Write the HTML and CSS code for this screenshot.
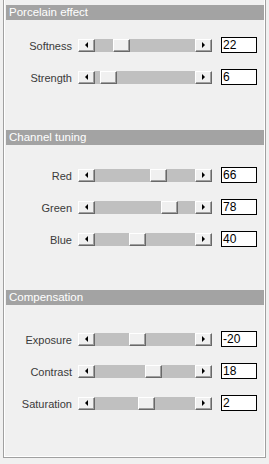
FILE: index.html
```html
<!DOCTYPE html>
<html lang="en">
<head>
    <meta charset="UTF-8">
    <title>Effect settings</title>
    <link rel="stylesheet" href="styles.css">
</head>
<body>

    <div class="panel">
        <div class="section section-porcelain">
            <div class="section-title">Porcelain effect</div>
            <div class="row">
                <div class="row-label">Softness</div>
                <div class="slider">
                    <div class="slider-btn"><span class="arrow arrow-left"></span></div>
                    <div class="slider-track"><div class="slider-thumb" style="margin-left:18px"></div></div>
                    <div class="slider-btn"><span class="arrow arrow-right"></span></div>
                </div>
                <div class="value-box">22</div>
            </div>
            <div class="row">
                <div class="row-label">Strength</div>
                <div class="slider">
                    <div class="slider-btn"><span class="arrow arrow-left"></span></div>
                    <div class="slider-track"><div class="slider-thumb" style="margin-left:5px"></div></div>
                    <div class="slider-btn"><span class="arrow arrow-right"></span></div>
                </div>
                <div class="value-box">6</div>
            </div>
        </div>

        <div class="section section-channel">
            <div class="section-title">Channel tuning</div>
            <div class="row">
                <div class="row-label">Red</div>
                <div class="slider">
                    <div class="slider-btn"><span class="arrow arrow-left"></span></div>
                    <div class="slider-track"><div class="slider-thumb" style="margin-left:55px"></div></div>
                    <div class="slider-btn"><span class="arrow arrow-right"></span></div>
                </div>
                <div class="value-box">66</div>
            </div>
            <div class="row">
                <div class="row-label">Green</div>
                <div class="slider">
                    <div class="slider-btn"><span class="arrow arrow-left"></span></div>
                    <div class="slider-track"><div class="slider-thumb" style="margin-left:66px"></div></div>
                    <div class="slider-btn"><span class="arrow arrow-right"></span></div>
                </div>
                <div class="value-box">78</div>
            </div>
            <div class="row">
                <div class="row-label">Blue</div>
                <div class="slider">
                    <div class="slider-btn"><span class="arrow arrow-left"></span></div>
                    <div class="slider-track"><div class="slider-thumb" style="margin-left:34px"></div></div>
                    <div class="slider-btn"><span class="arrow arrow-right"></span></div>
                </div>
                <div class="value-box">40</div>
            </div>
        </div>

        <div class="section section-compensation">
            <div class="section-title">Compensation</div>
            <div class="row">
                <div class="row-label">Exposure</div>
                <div class="slider">
                    <div class="slider-btn"><span class="arrow arrow-left"></span></div>
                    <div class="slider-track"><div class="slider-thumb" style="margin-left:34px"></div></div>
                    <div class="slider-btn"><span class="arrow arrow-right"></span></div>
                </div>
                <div class="value-box">-20</div>
            </div>
            <div class="row">
                <div class="row-label">Contrast</div>
                <div class="slider">
                    <div class="slider-btn"><span class="arrow arrow-left"></span></div>
                    <div class="slider-track"><div class="slider-thumb" style="margin-left:50px"></div></div>
                    <div class="slider-btn"><span class="arrow arrow-right"></span></div>
                </div>
                <div class="value-box">18</div>
            </div>
            <div class="row">
                <div class="row-label">Saturation</div>
                <div class="slider">
                    <div class="slider-btn"><span class="arrow arrow-left"></span></div>
                    <div class="slider-track"><div class="slider-thumb" style="margin-left:43px"></div></div>
                    <div class="slider-btn"><span class="arrow arrow-right"></span></div>
                </div>
                <div class="value-box">2</div>
            </div>
        </div>
    </div>

</body>
</html>
```
FILE: styles.css
```css
body {
    margin: 0;
    background: #f0f0f0;
    font-family: "Liberation Sans", Arial, sans-serif;
    font-size: 11px;
    color: #3a3a3a;
}

.panel {
    width: 263px;
    height: 458px;
    margin-left: 3px;
    box-sizing: border-box;
    border: 1px solid #a0a0a0;
    border-top: none;
    box-shadow: inset 1px 0 0 #fff, inset -1px -1px 0 #fff;
    padding: 5px 1px 0 2px;
}

.section {
    display: flex;
    flex-direction: column;
    gap: 16px;
}

.section-channel {
    margin-top: 45px;
}

.section-compensation {
    margin-top: 43px;
}

.section-title {
    height: 15px;
    line-height: 15px;
    background: #a3a3a3;
    color: #fff;
    font-size: 11.5px;
    padding-left: 3px;
}

.section-porcelain .section-title {
    margin-bottom: 1px;
}

.section-channel .section-title {
    margin-bottom: 6px;
}

.section-compensation .section-title {
    margin-bottom: 10px;
}

.row {
    display: flex;
    align-items: center;
    height: 16px;
}

.row-label {
    width: 66px;
    text-align: right;
    font-size: 11px;
    margin-right: 6px;
    padding-top: 1px;
}

.slider {
    display: flex;
    width: 134px;
    height: 13px;
    margin-right: 9px;
}

.slider-btn,
.slider-thumb {
    width: 17px;
    height: 13px;
    box-sizing: border-box;
    background: #f0f0f0;
    border: 1px solid;
    border-color: #fff #696969 #696969 #fff;
    box-shadow: inset -1px -1px 0 #a0a0a0;
    flex-shrink: 0;
}

.slider-btn {
    display: flex;
    align-items: center;
    justify-content: center;
    padding: 0 1px 1px 0;
}

.slider-track {
    flex: 1;
    display: flex;
    background: #c0c0c0;
}

.arrow {
    width: 0;
    height: 0;
    border-top: 3px solid transparent;
    border-bottom: 3px solid transparent;
}

.arrow-left {
    border-right: 3px solid #000;
}

.arrow-right {
    border-left: 3px solid #000;
}

.value-box {
    width: 36px;
    height: 16px;
    box-sizing: border-box;
    border: 1px solid #000;
    background: #fff;
    color: #000;
    font-size: 12px;
    line-height: 14px;
    padding-left: 1px;
}
```
